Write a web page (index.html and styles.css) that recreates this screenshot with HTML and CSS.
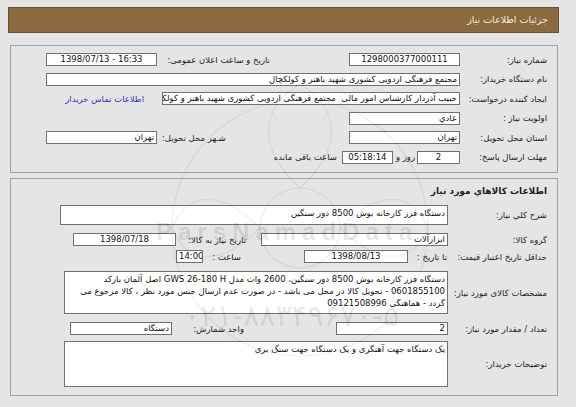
FILE: index.html
```html
<!DOCTYPE html>
<html lang="fa" dir="rtl">
<head>
<meta charset="utf-8">
<title>جزئیات اطلاعات نیاز</title>
<link rel="stylesheet" href="styles.css">
</head>
<body>
<div class="page">
  <div class="header">جزئیات اطلاعات نیاز</div>

  <div class="panel p1">
    <div class="row">
      <span class="lbl l1">شماره نیاز:</span>
      <span class="box c w111" dir="ltr">1298000377000111</span>
      <span class="lbl2 w192 pr79">تاریخ و ساعت اعلان عمومی:</span>
      <span class="box c w111" dir="ltr">1398/07/13 - 16:33</span>
    </div>
    <div class="row">
      <span class="lbl l1">نام دستگاه خریدار:</span>
      <span class="box grow">مجتمع فرهنگی اردویی کشوری شهید باهنر و کولکچال</span>
    </div>
    <div class="row">
      <span class="lbl l1">ایجاد کننده درخواست:</span>
      <span class="box w298">حبیب آذردار کارشناس امور مالی&nbsp; مجتمع فرهنگی اردویی کشوری شهید باهنر و کولکچال</span>
      <a class="link" href="#">اطلاعات تماس خریدار</a>
    </div>
    <div class="row">
      <span class="lbl l1">اولویت نیاز :</span>
      <span class="box w111">عادي</span>
    </div>
    <div class="row">
      <span class="lbl l1">استان محل تحویل:</span>
      <span class="box w111">تهران</span>
      <span class="lbl2 w192 pr123">شـهر محل تحویل:</span>
      <span class="box w111">تهران</span>
    </div>
    <div class="row">
      <span class="lbl l1">مهلت ارسال پاسخ:</span>
      <span class="box c w43">2</span>
      <span class="sep">روز و</span>
      <span class="box c w51" dir="ltr">05:18:14</span>
      <span class="sep2">ساعت باقی مانده</span>
    </div>
  </div>

  <div class="panel p2">
    <div class="title">اطلاعات کالاهاي مورد نياز</div>
    <div class="row r-sharh">
      <span class="lbl l2">شرح کلي نياز:</span>
      <span class="box area w388 h20">دستگاه فرز کارخانه بوش 8500 دور سنگین</span>
    </div>
    <div class="row r17 mt6">
      <span class="lbl l2">گروه کالا:</span>
      <span class="box w187">ابزارآلات</span>
      <span class="lbl2 w85 pr15">تاریخ نیاز به کالا:</span>
      <span class="box c w103" dir="ltr">1398/07/18</span>
    </div>
    <div class="row r17">
      <span class="lbl l2">حداقل تاریخ اعتبار قیمت:</span>
      <span class="lbl2 w40 pr1">تا تاریخ :</span>
      <span class="box c w104" dir="ltr">1398/08/13</span>
      <span class="lbl2 w101 pr63">ساعت :</span>
      <span class="box c w27" dir="ltr">14:00</span>
    </div>
    <div class="row r-spec">
      <span class="lbl l2">مشخصات کالای مورد نیاز:</span>
      <span class="box area w384 h43">دستگاه فرز کارخانه بوش 8500 دور سنگین، 2600 وات مدل GWS 26-180 H اصل آلمان بارکد 0601855100 - تحویل کالا در محل می باشد - در صورت عدم ارسال جنس مورد نظر ، کالا مرجوع می گردد - هماهنگی 09121508996</span>
    </div>
    <div class="row r17 mt6">
      <span class="lbl l2">تعداد / مقدار مورد نیاز:</span>
      <span class="box w112">2</span>
      <span class="lbl2 w164 pr92">واحد شمارش:</span>
      <span class="box w102">دستگاه</span>
    </div>
    <div class="row r-desc">
      <span class="lbl l2">توضیحات خریدار:</span>
      <span class="box area w384 h46">یک دستگاه جهت آهنگری و یک دستگاه جهت سنگ بری</span>
    </div>
  </div>

  <div class="watermark" aria-hidden="true">
    <svg class="wm-logo" width="551" height="400" viewBox="0 0 551 400">
      <g fill="none" stroke="rgba(0,0,0,0.07)" stroke-width="1.2">
        <circle cx="292" cy="228" r="128"/>
        <circle cx="292" cy="228" r="40"/>
        <path d="M292 188 C250 150 250 110 292 84 C334 110 334 150 292 188 Z"/>
        <path d="M252 228 C214 190 180 190 164 228 C180 266 214 266 252 228 Z"/>
        <path d="M332 228 C370 190 404 190 420 228 C404 266 370 266 332 228 Z"/>
      </g>
    </svg>
    <span class="wm-brand">ParsNamadData</span>
    <span class="wm-phone">۰۲۱-۸۸۳۴۹۶۷۰-۵</span>
  </div>
</div>
</body>
</html>
```
FILE: styles.css
```css
* { box-sizing: border-box; }

html, body {
  margin: 0;
  padding: 0;
  background: #e5e5e5;
  overflow: hidden;
}

body {
  direction: rtl;
  font-family: "DejaVu Sans", sans-serif;
  font-size: 8.5px;
  color: #1e1e1e;
  width: 576px;
  height: 407px;
}

.page {
  position: relative;
  width: 551px;
  margin-left: 8px;
  margin-right: 17px;
  padding-top: 7px;
}

.header {
  height: 26px;
  line-height: 24px;
  background: #8b6a3f;
  border: 1px solid #6b5131;
  color: #f2ece0;
  font-size: 9.5px;
  padding-right: 10px;
}

.panel {
  border: 1px solid #a3a3a3;
  background: #e5e5e5;
  margin-left: 2px;
  margin-right: 1px;
}

.p1 {
  margin-top: 12px;
  padding: 4px 10px 5px 35px;
}

.p2 {
  margin-top: 5px;
  padding: 1px 10px 8px 20px;
}

.row {
  display: flex;
  align-items: center;
  height: 19.5px;
  white-space: nowrap;
}

.lbl { flex: none; }
.l1 { width: 87px; }
.l2 { width: 99px; }

.lbl2 { flex: none; }
.w192 { width: 192px; }
.w85 { width: 85px; }
.w40 { width: 40px; }
.w101 { width: 101px; }
.w164 { width: 164px; }
.pr79 { padding-right: 79px; }
.pr123 { padding-right: 123px; }
.pr15 { padding-right: 15px; }
.pr1 { padding-right: 1px; }
.pr63 { padding-right: 63px; }
.pr92 { padding-right: 92px; }

.box {
  flex: none;
  display: block;
  height: 13px;
  line-height: 11px;
  background: #fff;
  border: 1px solid #707070;
  padding: 0 2px;
  overflow: hidden;
  white-space: nowrap;
  color: #111;
}
.box.c { text-align: center; }
.box.grow { flex: 1; }

.w111 { width: 111px; }
.w298 { width: 298px; }
.w43 { width: 43px; }
.w51 { width: 51px; }
.w388 { width: 388px; }
.w384 { width: 384px; }
.w187 { width: 187px; }
.w103 { width: 103px; }
.w104 { width: 104px; }
.w27 { width: 27px; }
.w112 { width: 112px; }
.w102 { width: 102px; }

.box.area {
  white-space: normal;
  line-height: 12px;
  padding: 1px 2px;
  align-self: flex-start;
}
.h20 { height: 20px !important; }
.h43 { height: 43px !important; }
.h46 { height: 46px !important; }

.link {
  color: #3434b0;
  text-decoration: none;
  margin-right: 18px;
}

.sep { padding: 0 2px 0 3px; }
.sep2 { padding-right: 5px; }

.title {
  height: 22px;
  line-height: 22px;
  font-weight: bold;
  font-size: 9px;
  color: #222;
}

.r-sharh { height: 20px; margin-top: 3px; }
.r17 { height: 17px; }
.mt6 { margin-top: 6px; }
.r-spec { height: 43px; margin-top: 6px; }
.r-desc { height: 46px; margin-top: 4px; }

.watermark {
  position: absolute;
  left: 0;
  top: 0;
  width: 551px;
  height: 400px;
  overflow: hidden;
  pointer-events: none;
  direction: ltr;
}
.wm-logo {
  position: absolute;
  left: 0;
  top: 0;
}
.wm-brand {
  position: absolute;
  left: 148px;
  top: 218px;
  font-family: "Liberation Sans", sans-serif;
  font-weight: bold;
  font-size: 24px;
  letter-spacing: 6px;
  color: rgba(0, 0, 0, 0.11);
}
.wm-phone {
  position: absolute;
  left: 176px;
  top: 298px;
  font-family: "DejaVu Sans", sans-serif;
  font-size: 30px;
  color: rgba(0, 0, 0, 0.09);
}
```
